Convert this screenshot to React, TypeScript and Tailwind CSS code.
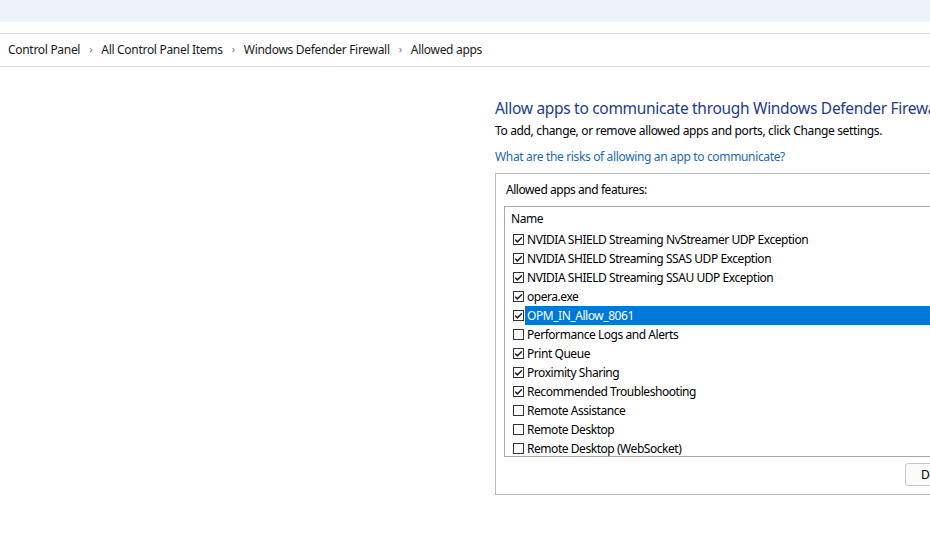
import { Check } from "lucide-react";

const apps = [
  { name: "NVIDIA SHIELD Streaming NvStreamer UDP Exception", on: true },
  { name: "NVIDIA SHIELD Streaming SSAS UDP Exception", on: true },
  { name: "NVIDIA SHIELD Streaming SSAU UDP Exception", on: true },
  { name: "opera.exe", on: true },
  { name: "OPM_IN_Allow_8061", on: true, selected: true },
  { name: "Performance Logs and Alerts", on: false },
  { name: "Print Queue", on: true },
  { name: "Proximity Sharing", on: true },
  { name: "Recommended Troubleshooting", on: true },
  { name: "Remote Assistance", on: false },
  { name: "Remote Desktop", on: false },
  { name: "Remote Desktop (WebSocket)", on: false },
];

const crumbs = ["Control Panel", "All Control Panel Items", "Windows Defender Firewall", "Allowed apps"];

function Box({ on }: { on: boolean }) {
  return (
    <span className="w-[11px] h-[11px] border border-[#333] bg-white flex items-center justify-center shrink-0">
      {on && <Check className="w-[10px] h-[10px] text-[#222]" strokeWidth={4} />}
    </span>
  );
}

export default function App() {
  return (
    <div className="w-[930px] h-[554px] overflow-hidden bg-white text-[12px] tracking-[-0.45px] text-black font-['Noto_Sans',sans-serif]">
      <div className="h-[22px] bg-[#eef2f9]" />
      <div className="mt-[11px] h-[34px] border-y border-[#dcdcdc] flex items-center pl-[8px] gap-[9px] text-[#1a1a1a] tracking-[-0.3px]">
        {crumbs.map((c, i) => (
          <div key={c} className="flex items-center gap-[9px]">
            {i > 0 && <span className="text-[#777] text-[11px] pb-[1px]">›</span>}
            <span>{c}</span>
          </div>
        ))}
      </div>

      <div className="pl-[495px] pt-[30px] w-[1200px]">
        <h1 className="text-[15.5px] tracking-[-0.3px] leading-[22px] text-[#1e3c88] whitespace-nowrap">
          Allow apps to communicate through Windows Defender Firewall
        </h1>
        <p className="mt-[3px] leading-[17px] tracking-[-0.35px]">To add, change, or remove allowed apps and ports, click Change settings.</p>
        <p className="mt-[9px] leading-[17px] text-[#1a6aab] tracking-[-0.35px]">What are the risks of allowing an app to communicate?</p>

        <div className="mt-[8px] h-[322px] border border-[#b9b9b9] pl-[8px] pr-[8px] w-[600px]">
          <div className="pt-[7px] h-[32px] pl-[2px]">Allowed apps and features:</div>
          <div className="h-[251px] border border-[#a8a8a8] overflow-hidden">
            <div className="h-[23px] pl-[6px] flex items-center">Name</div>
            {apps.map((a) => (
              <div key={a.name} className="h-[19px] flex items-center pl-[8px]">
                <Box on={a.on} />
                <span
                  className={`ml-[1px] pl-[2px] h-[19px] flex items-center flex-1 whitespace-nowrap ${
                    a.selected ? "bg-[#0078d7] text-white" : ""
                  }`}
                >
                  {a.name}
                </span>
              </div>
            ))}
          </div>
          <div className="flex pt-[6px] pl-[401px]">
            <div className="h-[23px] w-[80px] border border-[#c8c8c8] rounded-[3px] bg-[#fbfbfb] flex items-center pl-[15px]">
              Details...
            </div>
          </div>
        </div>
      </div>
    </div>
  );
}
